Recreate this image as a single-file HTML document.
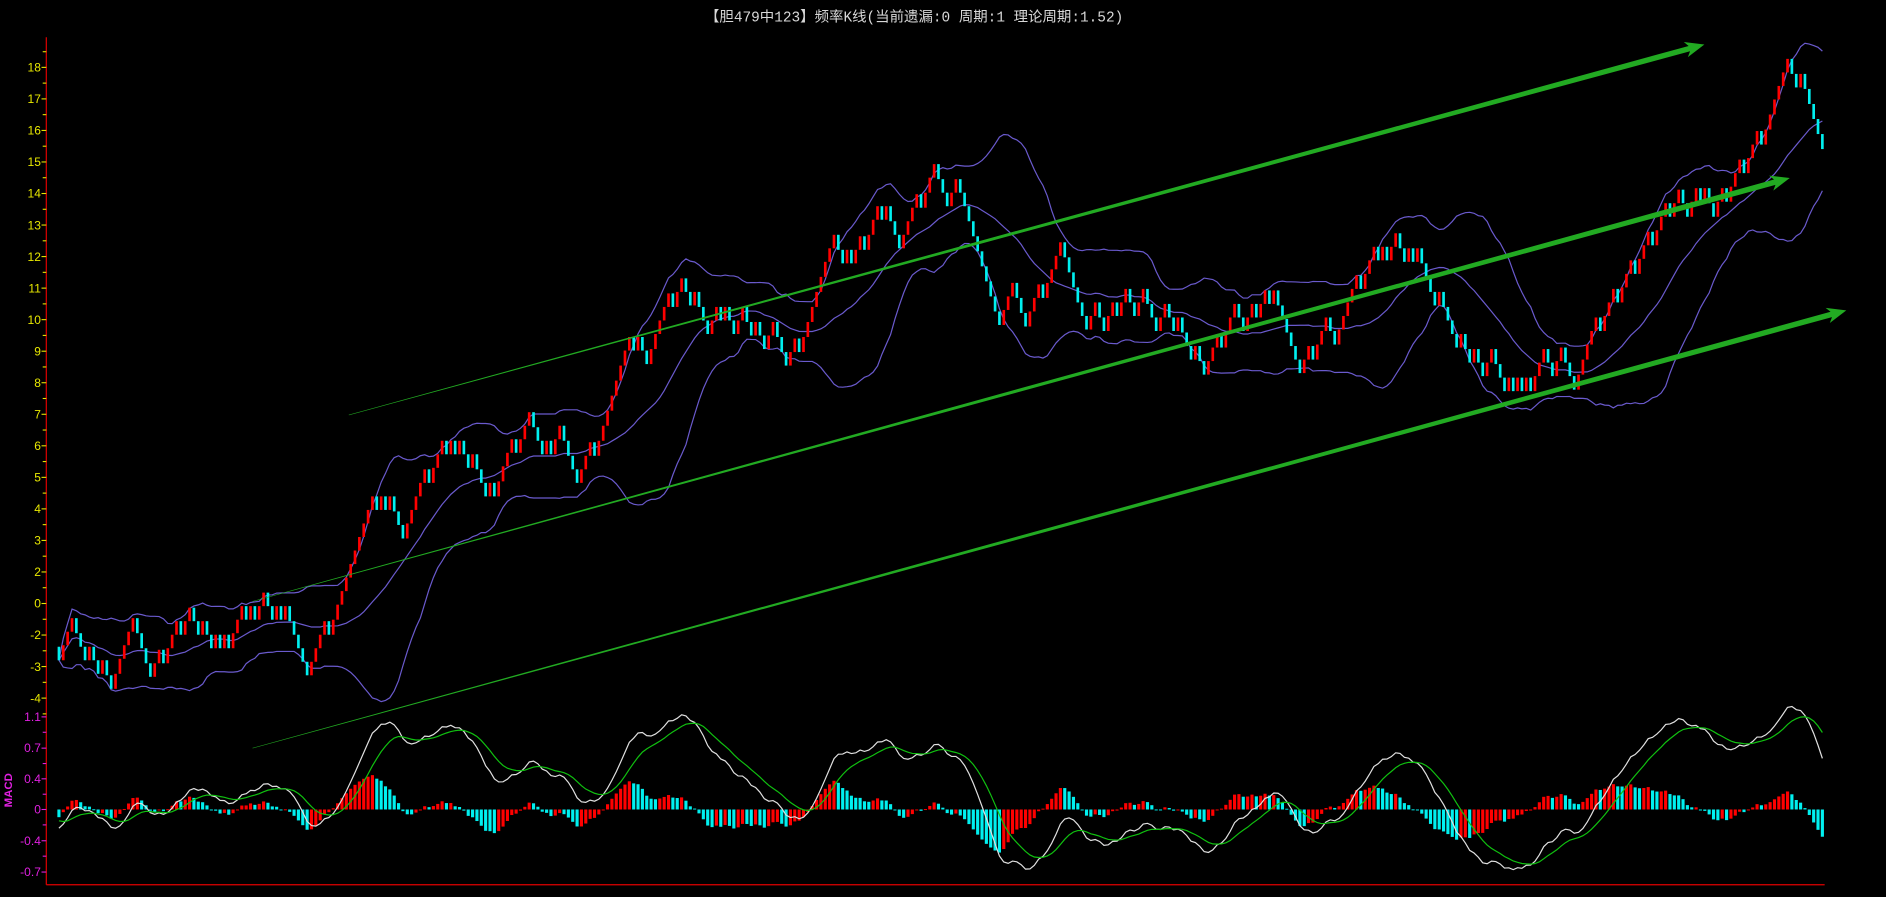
<!DOCTYPE html>
<html><head><meta charset="utf-8"><style>
html,body{margin:0;padding:0;background:#000;overflow:hidden}
svg{display:block}
text{font-family:"Liberation Sans","Noto Sans CJK SC",sans-serif}
text.t{font-family:"Liberation Mono","Noto Sans CJK SC",monospace}
</style></head><body>
<svg id="c" width="1886" height="897" viewBox="0 0 1568 745.75" xmlns="http://www.w3.org/2000/svg">
<rect width="1568" height="746" fill="#000"/>
<text class="t" x="760" y="18" fill="#d8d8d8" font-size="12" text-anchor="middle">【胆479中123】频率K线(当前遗漏:0 周期:1 理论周期:1.52)</text>
<g id="axis" font-size="10" fill="#e8e800" text-anchor="end">
<text x="34" y="59.5">18</text><text x="34" y="85.7">17</text><text x="34" y="111.9">16</text><text x="34" y="138.1">15</text><text x="34" y="164.4">14</text><text x="34" y="190.6">13</text><text x="34" y="216.8">12</text><text x="34" y="243">11</text><text x="34" y="269.2">10</text><text x="34" y="295.5">9</text><text x="34" y="321.7">8</text><text x="34" y="347.9">7</text><text x="34" y="374.1">6</text><text x="34" y="400.3">5</text><text x="34" y="426.6">4</text><text x="34" y="452.8">3</text><text x="34" y="479">2</text><text x="34" y="505.2">0</text><text x="34" y="531.4">-2</text><text x="34" y="557.7">-3</text><text x="34" y="583.9">-4</text>
</g>
<g font-size="10" fill="#e020e0" text-anchor="end">
<text x="34" y="599.5">1.1</text><text x="34" y="625.2">0.7</text><text x="34" y="651">0.4</text><text x="34" y="676.5">0</text><text x="34" y="702.5">-0.4</text><text x="34" y="728.5">-0.7</text>
<text transform="translate(10,657) rotate(-90)" text-anchor="middle" font-size="9.5" font-weight="bold">MACD</text>
</g>
<g id="g"></g>
</svg>
<script>
(function(){
var NS="http://www.w3.org/2000/svg",G=document.getElementById('g');
function el(t,a){var e=document.createElementNS(NS,t);for(var k in a)e.setAttribute(k,a[k]);G.appendChild(e);return e;}
el('line',{x1:38.5,y1:31,x2:38.5,y2:735.6,stroke:'#e00000','stroke-width':1});
el('line',{x1:38.5,y1:735.6,x2:1517,y2:735.6,stroke:'#e00000','stroke-width':1});
for(var i=0;i<21;i++){var y=56+i*26.22;el('line',{x1:34.5,y1:y,x2:38.5,y2:y,stroke:'#e8e800','stroke-width':0.9});el('line',{x1:35.5,y1:y+13.1,x2:38.5,y2:y+13.1,stroke:'#e8e800','stroke-width':0.9});}
el('line',{x1:35.5,y1:43,x2:38.5,y2:43,stroke:'#e8e800','stroke-width':0.9});
[596,622,647.5,673,699,725].forEach(function(y,i){el('line',{x1:34.5,y1:y,x2:38.5,y2:y,stroke:'#e020e0','stroke-width':0.9});if(i<5)el('line',{x1:35.5,y1:y+12.8,x2:38.5,y2:y+12.8,stroke:'#e020e0','stroke-width':0.9});});
var P=[[47,540],[60,525],[90,565],[110,525],[125,560],[140,530],[160,510],[180,540],[200,515],[220,500],[240,515],[255,560],[270,520],[290,480],[305,425],[320,415],[335,440],[350,405],[370,370],[385,375],[405,410],[420,380],[440,355],[455,375],[465,360],[480,400],[500,350],[520,285],[540,290],[560,240],[575,245],[590,270],[600,260],[620,270],[640,280],[655,300],[670,265],[690,205],[710,215],[730,172],[750,200],[772,145],[790,165],[800,160],[810,215],[825,262],[840,245],[850,265],[860,250],[880,212],[895,250],[905,270],[925,258],[940,245],[960,265],[975,260],[990,295],[1000,315],[1020,262],[1040,268],[1055,240],[1070,270],[1080,312],[1100,275],[1115,268],[1135,218],[1160,205],[1175,212],[1185,235],[1200,255],[1215,290],[1230,300],[1250,310],[1262,325],[1280,305],[1295,295],[1308,318],[1318,285],[1340,250],[1365,212],[1390,170],[1410,162],[1425,172],[1450,138],[1470,95],[1484,58],[1495,65],[1503,110],[1510,148],[1517,135]];
function tgt(x){for(var i=1;i<P.length;i++){if(x<=P[i][0]){var a=P[i-1],b=P[i],t=(x-a[0])/(b[0]-a[0]);return a[1]+t*(b[1]-a[1]);}}return P[P.length-1][1];}
var sp=3.62,N=Math.floor((1517-49)/sp)+1,B=12.5,p=tgt(49),alt=1,C=[],O=[];
for(var i=0;i<N;i++){var x=49+i*sp,t=tgt(x),d=t-p,np;
 if(Math.abs(d)<5){np=p+alt*B*0.9;alt=-alt;} else if(Math.abs(d)<B){np=p+(d>0?1:-1)*B*0.9;} else np=p+(d>0?1:-1)*B;
 O.push(p);C.push(np);p=np;}
var W=22,mid=[],up=[],lo=[];
for(var i=0;i<N;i++){var s=Math.max(0,i-W+1),n=i-s+1,m=0;for(var j=s;j<=i;j++)m+=C[j];m/=n;var v=0;for(var j=s;j<=i;j++)v+=(C[j]-m)*(C[j]-m);v=Math.sqrt(v/n);mid.push(m);up.push(m-1.9*v);lo.push(m+1.9*v);}
function pl(arr,col,w,sc,base){var s='';for(var i=0;i<arr.length;i++){s+=(49+i*sp).toFixed(1)+','+(base!==undefined?base-arr[i]*sc:arr[i]).toFixed(1)+' ';}el('polyline',{points:s,fill:'none',stroke:col,'stroke-width':w});}
pl(up,'#6a5acd',1);pl(mid,'#6a5acd',1);pl(lo,'#6a5acd',1);
for(var i=0;i<N;i++){var x=49+i*sp,o=O[i],c=C[i],ty=Math.min(o,c),h=Math.abs(o-c);if(h<3)h=3;
 el('rect',{x:(x-1.1).toFixed(2),y:ty.toFixed(2),width:2.2,height:h.toFixed(2),fill:c<o?'#ff0000':'#00f0f0'});}
function arrow(x0,y0,x1,y1,w0,w1){var dx=x1-x0,dy=y1-y0,L=Math.sqrt(dx*dx+dy*dy),ux=dx/L,uy=dy/L,nx=-uy,ny=ux,hl=13,hw=6.5;
 var bx=x1-ux*hl,by=y1-uy*hl;
 var pts=[[x0+nx*w0,y0+ny*w0],[bx+nx*w1,by+ny*w1],[bx+nx*hw-ux*3,by+ny*hw-uy*3],[x1,y1],[bx-nx*hw-ux*3,by-ny*hw-uy*3],[bx-nx*w1,by-ny*w1],[x0-nx*w0,y0-ny*w0]];
 el('polygon',{points:pts.map(function(q){return q[0].toFixed(1)+','+q[1].toFixed(1)}).join(' '),fill:'#22aa22'});}
arrow(290,345,1417,37,0.2,2.3);
arrow(210,500,1488,148,0.2,2.3);
arrow(210,622,1535,258,0.2,2.3);
var val=C.map(function(y){return (502-y)/26.2;}),e12=val[0]+0.05,e26=val[0]+0.3,dea=-0.12,DIF=[],DEA=[],H=[];
for(var i=0;i<N;i++){e12=e12+(val[i]-e12)*2/13;e26=e26+(val[i]-e26)*2/27;var df=e12-e26;dea=dea+(df-dea)*2/10;DIF.push(df);DEA.push(dea);H.push(df-dea);}
var sc=66;
for(var i=0;i<N;i++){var x=49+i*sp,h=H[i]*sc*1.05,col=(i>0&&H[i]>H[i-1])?'#ff0000':'#00f0f0';
 el('rect',{x:(x-1.3).toFixed(2),y:(h>0?673-h:673).toFixed(2),width:2.6,height:Math.max(0.8,Math.abs(h)).toFixed(2),fill:col});}
pl(DIF,'#e0e0e0',1,sc,673);pl(DEA,'#10c010',1,sc,673);
})();
</script>
</body></html>
